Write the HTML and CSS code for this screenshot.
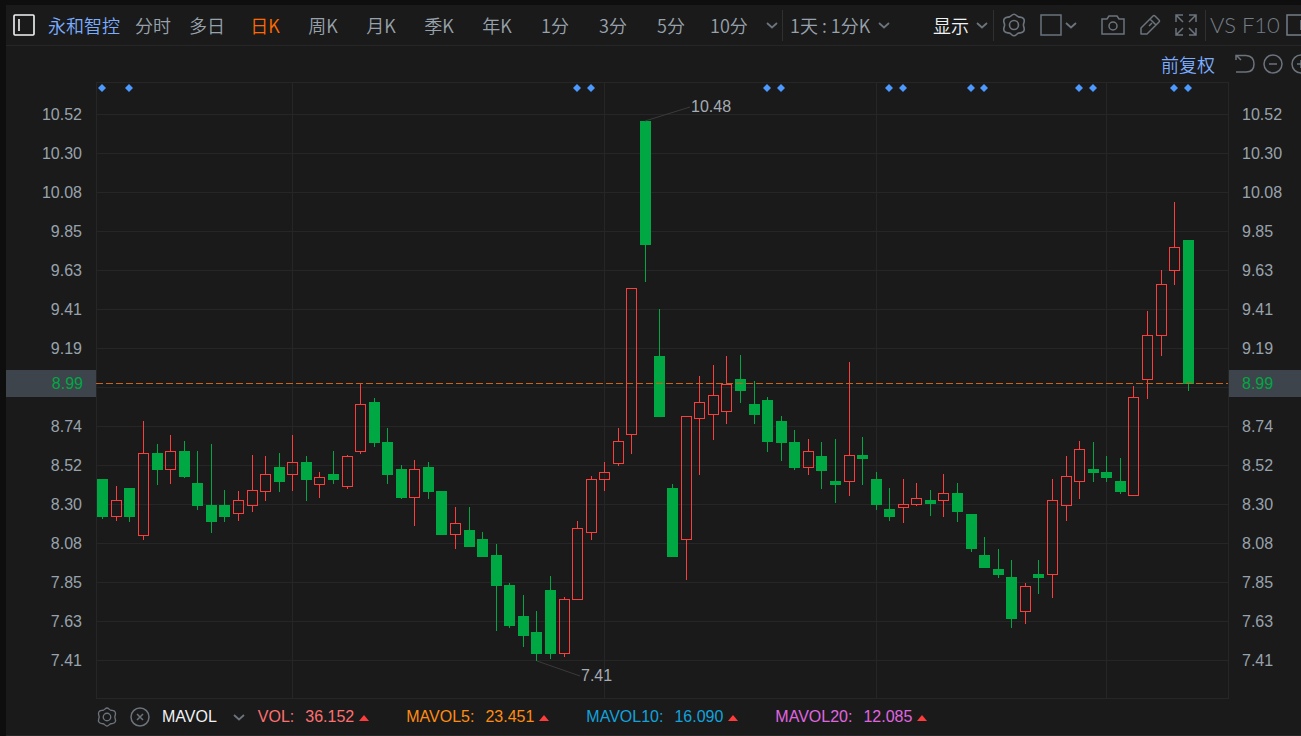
FILE: index.html
```html
<!DOCTYPE html>
<html lang="zh-CN">
<head>
    <meta charset="UTF-8">
    <meta name="viewport" content="width=device-width, initial-scale=1.0">
    <title>永和智控 日K</title>
    <link rel="stylesheet" href="styles.css">
</head>
<body>

    <svg class="defs" aria-hidden="true">
        <symbol id="chevron" viewBox="0 0 12 12">
            <path d="M1 4 L6 8.5 L11 4" fill="none" stroke="currentColor" stroke-width="1.8"/>
        </symbol>
        <symbol id="gear" viewBox="0 0 24 24">
            <path d="M12 1.2 C14.2 1.2 14.6 3.4 16.6 3.9 C18.6 4.4 20.6 3.8 21.8 6 C23.2 8.6 21.4 9.8 21.4 12 C21.4 14.2 23.2 15.4 21.8 18 C20.6 20.2 18.6 19.6 16.6 20.1 C14.6 20.6 14.2 22.8 12 22.8 C9.8 22.8 9.4 20.6 7.4 20.1 C5.4 19.6 3.4 20.2 2.2 18 C0.8 15.4 2.6 14.2 2.6 12 C2.6 9.8 0.8 8.6 2.2 6 C3.4 3.8 5.4 4.4 7.4 3.9 C9.4 3.4 9.8 1.2 12 1.2 Z" fill="none" stroke="currentColor" stroke-width="1.6"/>
            <circle cx="12" cy="12" r="4.5" fill="none" stroke="currentColor" stroke-width="1.6"/>
        </symbol>
    </svg>

    <main class="panel">
        <header class="toolbar">
            <button class="layout-btn" aria-label="布局">
                <svg width="22" height="22"><rect x="1" y="1" width="20" height="20" rx="1" fill="none" stroke="#f2f4f6" stroke-width="1.6"/><path d="M6 5 V17" stroke="#f2f4f6" stroke-width="1.6"/></svg>
            </button>
            <a class="stock" href="#">永和智控</a>
            <nav class="tabs">
                <button class="tab day">分时</button>
                <button class="tab day">多日</button>
            </nav>
            <nav class="tabs">
                <button class="tab active">日K</button>
                <button class="tab">周K</button>
                <button class="tab">月K</button>
                <button class="tab">季K</button>
                <button class="tab">年K</button>
                <button class="tab">1分</button>
                <button class="tab">3分</button>
                <button class="tab">5分</button>
                <button class="tab">10分</button>
            </nav>
            <button class="more" aria-label="更多周期"><svg class="chevron"><use href="#chevron"/></svg></button>
            <button class="range">1天 : 1分K <svg class="chevron"><use href="#chevron"/></svg></button>
            <button class="display">显示 <svg class="chevron"><use href="#chevron"/></svg></button>
            <div class="tools">
                <button aria-label="设置"><svg width="24" height="24"><use href="#gear"/></svg></button>
                <button class="shape" aria-label="窗口">
                    <svg width="22" height="22"><rect x="1" y="1" width="20" height="20" fill="none" stroke="currentColor" stroke-width="1.5"/></svg>
                    <svg class="chevron"><use href="#chevron"/></svg>
                </button>
                <button class="camera" aria-label="截图">
                    <svg width="24" height="20" fill="none" stroke="currentColor" stroke-width="1.5"><path d="M1 4 H6 L8 1 H16 L18 4 H23 V19 H1 Z"/><circle cx="12" cy="11" r="4"/></svg>
                </button>
                <button aria-label="画线">
                    <svg width="22" height="22" fill="none" stroke="currentColor" stroke-width="1.5" stroke-linejoin="round"><path d="M2 20 L2 14 L14 2 Q15 1 16 2 L20 6 Q21 7 20 8 L8 20 Z M11 5 L17 11 M10 12 L13 9"/></svg>
                </button>
                <button aria-label="全屏">
                    <svg width="22" height="22" fill="none" stroke="currentColor" stroke-width="1.5"><path d="M1 8 V1 H8 M1 1 L8 8 M14 1 H21 V8 M21 1 L14 8 M1 14 V21 H8 M1 21 L8 14 M14 21 H21 V14 M21 21 L14 14"/></svg>
                </button>
            </div>
            <div class="extra">
                <button class="thin">VS</button>
                <button class="thin">F10</button>
                <button aria-label="侧栏"><svg width="26" height="22" fill="none" stroke="currentColor" stroke-width="1.5"><path d="M1 1 H25 V21 H1 Z M15 6 V16"/></svg></button>
            </div>
        </header>

        <div class="subbar">
            <a class="adjust" href="#">前复权</a>
            <button aria-label="撤销"><svg width="20" height="20" fill="none" stroke="currentColor" stroke-width="1.5"><path d="M1 1 L6 6 M1 6 V1.5 H11 Q19 2 19 10 Q19 18 11 18 H1"/></svg></button>
            <button aria-label="缩小"><svg width="20" height="20" fill="none" stroke="currentColor" stroke-width="1.5"><circle cx="10" cy="10" r="9"/><path d="M6 10 H14"/></svg></button>
            <button aria-label="放大"><svg width="20" height="20" fill="none" stroke="currentColor" stroke-width="1.5"><circle cx="10" cy="10" r="9"/><path d="M6 10 H14 M10 6 V14"/></svg></button>
        </div>

        <section class="chart">
            <div class="axis left">
                <span>10.52</span><span>10.30</span><span>10.08</span><span>9.85</span><span>9.63</span>
                <span>9.41</span><span>9.19</span><span></span><span>8.74</span><span>8.52</span>
                <span>8.30</span><span>8.08</span><span>7.85</span><span>7.63</span><span>7.41</span>
                <b class="price">8.99</b>
            </div>
            <svg id="plot" class="plot" viewBox="96 82 1133 617"></svg>
            <div class="axis right">
                <span>10.52</span><span>10.30</span><span>10.08</span><span>9.85</span><span>9.63</span>
                <span>9.41</span><span>9.19</span><span></span><span>8.74</span><span>8.52</span>
                <span>8.30</span><span>8.08</span><span>7.85</span><span>7.63</span><span>7.41</span>
                <b class="price">8.99</b>
            </div>
        </section>

        <footer class="legend">
            <button aria-label="指标设置"><svg width="20" height="20"><use href="#gear"/></svg></button>
            <button class="close" aria-label="关闭指标"><svg width="20" height="20" fill="none" stroke="currentColor" stroke-width="1.5"><circle cx="10" cy="10" r="9"/><path d="M7 7 L13 13 M13 7 L7 13"/></svg></button>
            <button class="indicator">MAVOL <svg class="chevron"><use href="#chevron"/></svg></button>
            <div class="values">
                <span class="item vol">VOL: <em>36.152</em><i class="up"></i></span>
                <span class="item ma5">MAVOL5: <em>23.451</em><i class="up"></i></span>
                <span class="item ma10">MAVOL10: <em>16.090</em><i class="up"></i></span>
                <span class="item ma20">MAVOL20: <em>12.085</em><i class="up"></i></span>
            </div>
        </footer>
    </main>

    <script>
        // x, high, body top, body bottom, low, 1 = rising
        const candles = [
            [102,479,479,517,519,0], [116,486,500,517,521,1], [129,488,488,517,522,0], [143,421,453,536,540,1],
            [157,444,453,470,485,0], [170,435,451,470,484,1], [184,441,451,477,478,0], [197,451,483,506,510,0],
            [211,444,505,522,533,0], [224,490,505,517,522,0], [238,491,500,514,521,1], [252,455,490,506,512,1],
            [265,456,474,492,501,1], [279,453,467,482,492,0], [292,435,462,475,491,1], [306,456,462,480,501,0],
            [319,472,477,485,498,1], [333,451,474,480,484,0], [347,455,456,487,489,1], [360,384,404,452,454,1],
            [374,398,402,443,447,0], [387,428,442,475,484,0], [401,465,469,498,499,0], [414,460,469,498,526,1],
            [428,462,467,492,499,0], [441,491,491,535,535,0], [455,507,523,535,549,1], [469,507,530,547,547,0],
            [482,532,539,557,557,0], [496,544,555,586,631,0], [509,583,585,626,628,0], [523,595,616,636,647,0],
            [536,611,632,654,661,0], [550,576,590,654,659,0], [564,597,599,654,657,1], [577,521,528,600,600,1],
            [591,476,479,533,540,1], [604,462,472,480,491,1], [618,428,441,464,466,1], [631,288,288,435,454,1],
            [645,121,121,245,282,0], [659,309,356,417,417,0], [672,484,488,557,557,0], [686,416,416,540,580,1],
            [699,376,402,419,475,1], [713,365,395,415,440,1], [726,356,384,412,424,1], [740,355,379,391,403,0],
            [754,381,404,415,424,0], [767,397,400,442,452,0], [781,416,421,443,461,0], [794,430,442,468,470,0],
            [808,439,451,468,475,1], [821,442,456,471,489,0], [835,439,481,485,503,0], [849,362,455,482,496,1],
            [862,437,455,459,485,0], [876,472,479,505,510,0], [889,488,509,517,521,0], [903,479,504,508,523,1],
            [916,483,498,505,506,1], [930,490,500,504,516,0], [943,474,493,501,517,1], [957,483,493,512,522,0],
            [971,514,514,549,552,0], [984,537,555,568,568,0], [998,549,569,575,578,0], [1011,560,577,619,628,0],
            [1025,583,586,612,624,1], [1038,560,574,578,594,0], [1052,479,500,575,598,1], [1066,456,476,506,521,1],
            [1079,441,449,482,499,1], [1093,442,469,473,482,0], [1106,456,472,478,482,0], [1120,458,481,492,494,0],
            [1133,386,397,496,496,1], [1147,311,335,380,399,1], [1161,270,284,336,356,1], [1174,202,247,271,285,1],
            [1188,240,240,384,391,0]
        ];
        const marks = [102, 129, 577, 591, 767, 781, 889, 903, 971, 984, 1079, 1093, 1174, 1188];

        function drawChart() {
            let out = "";

            for (let y = 114; y <= 660; y += 39) {
                out += `<path class="grid" d="M96 ${y + 0.5} H1229"/>`;
            }
            [292, 604, 876, 1106].forEach(x => {
                out += `<path class="grid" d="M${x + 0.5} 82 V699"/>`;
            });
            out += `<rect class="grid" x="96.5" y="82.5" width="1132" height="616"/>`;

            candles.forEach(([x, high, top, bottom, low, rising]) => {
                const c = x + 0.5;
                out += `<g class="${rising ? "rise" : "fall"}">
                    <path d="M${c} ${high} V${top} M${c} ${bottom} V${low}"/>
                    <rect x="${x - 4.5}" y="${top + 0.5}" width="10" height="${bottom - top - 1}"/>
                </g>`;
            });

            marks.forEach(x => {
                out += `<path class="mark" d="M${x} 84 l4 4 l-4 4 l-4 -4 z"/>`;
            });

            out += `<path class="current" d="M96 383.5 H1228"/>
                <path class="leader" d="M645 121 L690 107 M537 661 L580 676"/>
                <text x="691" y="112">10.48</text>
                <text x="581" y="681">7.41</text>`;
            document.getElementById("plot").innerHTML = out;
        }

        drawChart();
    </script>

</body>
</html>
```
FILE: styles.css
```css
* {
    box-sizing: border-box;
}

body {
    margin: 0;
    padding: 5px 0 0 6px;
    min-height: 100vh;
    background-color: #0e0e0e;
    color: #98a2ac;
    font-family: "Liberation Sans", "Noto Sans CJK SC", sans-serif;
    font-size: 16px;
    overflow-x: hidden;
}

button {
    display: flex;
    align-items: center;
    flex-shrink: 0;
    padding: 0;
    border: none;
    background: none;
    color: inherit;
    font: inherit;
    cursor: pointer;
}

a {
    color: #7aadff;
    text-decoration: none;
}

svg {
    display: block;
    flex-shrink: 0;
}

.defs {
    display: none;
}

.chevron {
    width: 12px;
    height: 12px;
    color: #6b737c;
}

.panel {
    background-color: #1a1a1a;
    min-height: calc(100vh - 5px);
    overflow: hidden;
}

.toolbar {
    display: flex;
    align-items: center;
    height: 41px;
    padding-left: 7px;
    border-bottom: 1px solid #262626;
    font-family: "Noto Sans CJK SC", sans-serif;
    font-size: 18px;
    font-weight: 350;
    line-height: 26px;
    white-space: nowrap;
}

.stock {
    flex-shrink: 0;
    margin-left: 13px;
    margin-right: 6px;
}

.tabs {
    display: flex;
    flex-shrink: 0;
    margin-right: 2px;
}

.tab {
    justify-content: center;
    width: 58px;
}

.tab.day {
    width: 54px;
}

.tab.active {
    color: #ff6a00;
}

.more {
    margin-left: 6px;
    padding-right: 4px;
    height: 31px;
    border-right: 1px solid #303030;
}

.range {
    gap: 8px;
    margin-left: 7px;
}

.display {
    gap: 7px;
    height: 31px;
    margin-left: auto;
    padding-right: 5px;
    border-right: 1px solid #303030;
    color: #f0f2f4;
}

.tools {
    display: flex;
    align-items: center;
    flex-shrink: 0;
    gap: 14px;
    height: 31px;
    padding: 0 8px;
    border-right: 1px solid #303030;
    color: #6b737c;
}

.shape {
    gap: 3px;
}

.camera {
    margin-left: 10px;
}

.extra {
    display: flex;
    align-items: center;
    flex-shrink: 0;
    gap: 6px;
    width: 95px;
    padding-left: 4px;
    color: #757d86;
}

.thin {
    font-family: Lato, sans-serif;
    font-size: 22px;
    font-weight: 300;
}

.subbar {
    display: flex;
    align-items: center;
    justify-content: flex-end;
    height: 36px;
    margin-right: -18px;
    color: #6b737c;
}

.subbar button {
    margin-right: 8px;
}

.adjust {
    margin-right: 20px;
    font-family: "Noto Sans CJK SC", sans-serif;
    font-size: 18px;
    font-weight: 350;
    line-height: 26px;
}

.chart {
    display: grid;
    grid-template-columns: 90px 1fr 72px;
}

.axis {
    position: relative;
    display: flex;
    flex-direction: column;
    padding-top: 13px;
    line-height: 39px;
}

.axis span {
    height: 39px;
}

.left {
    padding-right: 14px;
    text-align: right;
}

.right {
    padding-left: 13px;
}

.price {
    position: absolute;
    top: 288px;
    left: 0;
    right: 0;
    padding: 0 13px;
    background-color: #3d444b;
    color: #00a843;
    font-weight: normal;
    line-height: 27px;
}

.plot {
    width: 100%;
    height: auto;
}

.grid {
    fill: none;
    stroke: #262626;
}

.rise {
    fill: none;
    stroke: #fa3e3e;
}

.fall {
    fill: #00a843;
    stroke: #00a843;
}

.mark {
    fill: #4c9aff;
}

.current {
    stroke: #c8641a;
    stroke-dasharray: 7 3;
}

.leader {
    fill: none;
    stroke: #3a3a3a;
}

.plot text {
    fill: #a4acb4;
    font-size: 16px;
}

.legend {
    display: flex;
    align-items: center;
    height: 37px;
    padding-left: 91px;
    border-bottom: 1px solid #262626;
    color: #6b737c;
    white-space: nowrap;
}

.close {
    margin-left: 13px;
}

.indicator {
    gap: 16px;
    margin-left: 12px;
    color: #f0f2f4;
}

.values {
    display: flex;
    gap: 37px;
    margin-left: 13px;
}

.item {
    display: flex;
    align-items: center;
}

.item em {
    margin-left: 11px;
    font-style: normal;
}

.up {
    margin: 2px 0 0 5px;
    border: 5px solid transparent;
    border-top: none;
    border-bottom: 6px solid #ff3c3c;
}

.vol {
    color: #ff7070;
}

.ma5 {
    color: #ff8c12;
}

.ma10 {
    color: #12a2dc;
}

.ma20 {
    color: #e066e0;
}
```
